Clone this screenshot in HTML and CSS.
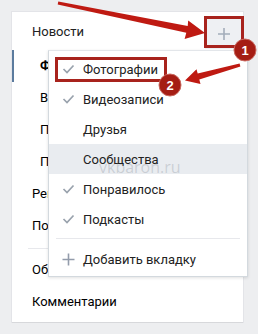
FILE: index.html
```html
<!DOCTYPE html>
<html lang="ru">
<head>
<meta charset="utf-8">
<link rel="stylesheet" href="styles.css">
</head>
<body>
<div class="page">
  <div class="card">
    <div class="head">
      <span class="head-title">Новости</span>
      <span class="add-btn">
        <svg width="14" height="14" viewBox="0 0 14 14"><path d="M7 1v12M1 7h12" stroke="#a3adba" stroke-width="1.6" fill="none"/></svg>
      </span>
    </div>
    <div class="row sub active">Фотографии</div>
    <div class="row sub">Видеозаписи</div>
    <div class="row sub">Понравилось</div>
    <div class="row sub">Подкасты</div>
    <div class="row">Рекомендации</div>
    <div class="row">Поиск</div>
    <div class="sep"></div>
    <div class="row">Обновления</div>
    <div class="row">Комментарии</div>
  </div>

  <div class="menu">
    <div class="item"><svg class="ic" width="13" height="10" viewBox="0 0 13 10"><path d="M1.5 5l3.5 3.5L11.5 1.5" stroke="#99a2ad" stroke-width="1.7" fill="none"/></svg><span>Фотографии</span></div>
    <div class="item"><svg class="ic" width="13" height="10" viewBox="0 0 13 10"><path d="M1.5 5l3.5 3.5L11.5 1.5" stroke="#99a2ad" stroke-width="1.7" fill="none"/></svg><span>Видеозаписи</span></div>
    <div class="item"><span class="ic"></span><span>Друзья</span></div>
    <div class="item hl"><span class="ic"></span><span>Сообщества</span></div>
    <div class="item"><svg class="ic" width="13" height="10" viewBox="0 0 13 10"><path d="M1.5 5l3.5 3.5L11.5 1.5" stroke="#99a2ad" stroke-width="1.7" fill="none"/></svg><span>Понравилось</span></div>
    <div class="item"><svg class="ic" width="13" height="10" viewBox="0 0 13 10"><path d="M1.5 5l3.5 3.5L11.5 1.5" stroke="#99a2ad" stroke-width="1.7" fill="none"/></svg><span>Подкасты</span></div>
    <div class="msep"></div>
    <div class="item"><svg class="ic" width="13" height="13" viewBox="0 0 13 13"><path d="M6.5 0.5v12M0.5 6.5h12" stroke="#939cab" stroke-width="1.6" fill="none"/></svg><span>Добавить вкладку</span></div>
  </div>

  <div class="watermark">vkbaron.ru</div>

  <svg class="notes" width="258" height="334" viewBox="0 0 258 334">
    <polygon points="58.3,1.5 187.7,26 188.2,20.6 205,33 184.6,39 186.3,32.8 57.7,4.5" fill="#bf1a12"/>
    <polygon points="240.4,66.6 199.3,79.4 200.5,84 185,80.5 196.5,69.3 197.7,73.4 239.6,63.4" fill="#bf1a12"/>
    <rect x="205.5" y="17.5" width="37" height="29" fill="none" stroke="#a8231d" stroke-width="3"/>
    <rect x="56.5" y="58.5" width="109" height="22" fill="none" stroke="#a8231d" stroke-width="3"/>
    <circle cx="245" cy="50" r="11" fill="#a51d14" stroke="#c9685f" stroke-width="1"/>
    <text x="245" y="54.5" class="num">1</text>
    <circle cx="170" cy="85" r="11" fill="#a51d14" stroke="#c9685f" stroke-width="1"/>
    <text x="170" y="89.5" class="num">2</text>
  </svg>
</div>
</body>
</html>
```
FILE: styles.css
```css
html, body {
  margin: 0;
  padding: 0;
  background: #edeef0;
}
.page {
  position: relative;
  width: 258px;
  height: 334px;
  overflow: hidden;
  font-family: Roboto, "Liberation Sans", sans-serif;
  font-size: 13px;
  color: #222;
}
.card {
  margin: 12px 0 0 12px;
  width: 231px;
  background: #fff;
  box-shadow: 0 1px 0 0 #d7d8db, 0 0 0 1px #e3e4e8;
  padding: 0 0 4px 0;
}
.head {
  display: flex;
  align-items: center;
  justify-content: space-between;
  height: 37px;
  padding-left: 20px;
  padding-top: 1px;
}
.head-title {
  color: #222;
}
.add-btn {
  width: 38px;
  height: 30px;
  margin-top: 4px;
  background: #eef0f3;
  display: flex;
  align-items: center;
  justify-content: center;
}
.row {
  height: 32px;
  line-height: 32px;
  padding-left: 20px;
  color: #000;
  white-space: nowrap;
}
.row.sub {
  padding-left: 28px;
}
.row.active {
  font-weight: bold;
  box-shadow: inset 2px 0 0 #5b7b9e;
}
.sep {
  height: 1px;
  background: #e7e8ec;
  margin: 6px 16px 5px 16px;
}
.menu {
  position: absolute;
  left: 48px;
  top: 50px;
  width: 200px;
  background: #fff;
  border: 1px solid #d3d9de;
  border-top-color: #e3e6ea;
  box-shadow: 0 1px 3px rgba(0, 0, 0, 0.12);
  padding: 3px 0 2px 0;
  box-sizing: border-box;
}
.item {
  display: flex;
  align-items: center;
  gap: 8px;
  height: 30px;
  padding-left: 13px;
  color: #222;
}
.item.hl {
  background: #e9ecf0;
}
.ic {
  width: 13px;
  flex: none;
  display: block;
}
.msep {
  height: 1px;
  background: #e7e8ec;
  margin: 4px 7px 5px 7px;
}
.watermark {
  position: absolute;
  left: 99px;
  top: 156px;
  font-family: "Open Sans", "Liberation Sans", sans-serif;
  font-size: 16px;
  color: rgba(120, 128, 140, 0.28);
}
.notes {
  position: absolute;
  left: 0;
  top: 0;
}
.num {
  font-family: "Liberation Sans", Arial, sans-serif;
  font-weight: bold;
  font-size: 13px;
  fill: #fff;
  text-anchor: middle;
}
```
